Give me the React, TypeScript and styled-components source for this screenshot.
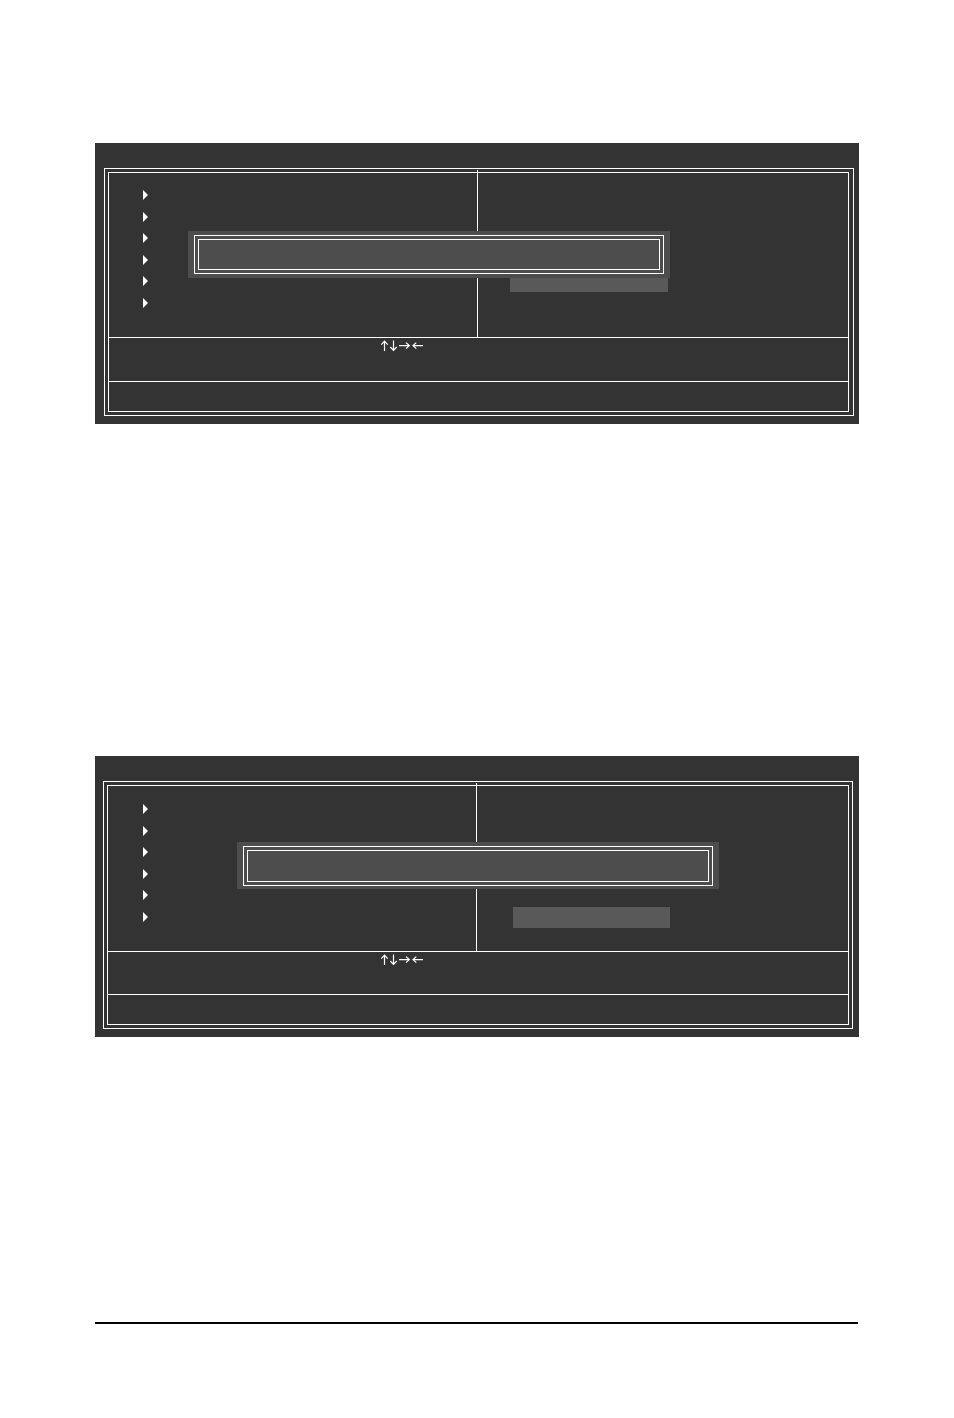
import React from "react";
import styled, { createGlobalStyle } from "styled-components";

const GlobalStyle = createGlobalStyle`
  *, *::before, *::after { box-sizing: border-box; }
  body { margin: 0; background: #fff; font-family: "Liberation Sans", Arial, sans-serif; }
`;

const Page = styled.main`
  padding: 143px 95px 94px;
`;

const Screen = styled.section<{ $left: number; $right: number }>`
  position: relative;
  background: #333;
  padding: 25px ${(p) => p.$right}px 8px ${(p) => p.$left}px;
  & + & { margin-top: 332px; }
`;

const OuterFrame = styled.div<{ $gapRight: number }>`
  border: 1px solid #fff;
  padding: 3px ${(p) => p.$gapRight}px 3px 3px;
`;

const InnerFrame = styled.div`
  border: 1px solid #fff;
`;

const Columns = styled.div<{ $height: number }>`
  display: grid;
  grid-template-columns: 1fr 1fr;
  height: ${(p) => p.$height}px;
  border-bottom: 1px solid #fff;
`;

const MenuColumn = styled.ul<{ $top: number; $indent: number }>`
  display: flex;
  flex-direction: column;
  justify-content: space-between;
  list-style: none;
  margin: 0;
  height: ${(p) => p.$top + 118}px;
  padding: ${(p) => p.$top}px 0 0 ${(p) => p.$indent}px;
`;

const MenuItem = styled.li`
  display: flex;
  height: 10px;
`;

const OptionColumn = styled.div<{ $top: number; $indent: number }>`
  position: relative;
  padding: ${(p) => p.$top}px 0 0 ${(p) => p.$indent}px;

  &::before {
    content: "";
    position: absolute;
    left: -2px;
    top: -3px;
    bottom: 0;
    width: 1px;
    background: #fff;
  }
`;

const Highlight = styled.div<{ $width: number }>`
  width: ${(p) => p.$width}px;
  height: 21px;
  background: #595959;
`;

const KeyHelp = styled.div<{ $height: number; $indent: number }>`
  display: flex;
  align-items: flex-start;
  height: ${(p) => p.$height}px;
  padding: 2px 0 0 ${(p) => p.$indent}px;
  border-bottom: 1px solid #fff;
`;

const HelpLine = styled.div`
  height: 29px;
`;

const Dialog = styled.div<{ $x: number; $y: number }>`
  position: absolute;
  left: ${(p) => p.$x}px;
  top: ${(p) => p.$y}px;
  width: 482px;
  height: 47px;
  display: flex;
  padding: 4px 6px;
  background: #4d4d4d;
`;

const DialogFrame = styled.div<{ $height: number }>`
  flex: 1;
  display: flex;
  height: ${(p) => p.$height}px;
  padding: 3px;
  border: 1px solid #fff;
`;

const DialogBody = styled.div`
  flex: 1;
  border: 1px solid #fff;
`;

const FooterRule = styled.hr`
  height: 2px;
  margin: 285px 1px 0 0;
  border: 0;
  background: #000;
`;

const Marker = () => (
  <svg width="5" height="10" viewBox="0 0 5 10" aria-hidden="true">
    <path d="M0 0L5 5L0 10Z" fill="#fff" />
  </svg>
);

const ArrowKeys = () => (
  <svg width="46" height="12" viewBox="0 0 46 12" fill="none" stroke="#fff" strokeWidth="1.2" role="img" aria-label="Arrow keys">
    <path d="M5.5 11V1.2M2.3 4.6L5.5 1.2L8.7 4.6" />
    <path d="M14.5 0.5V10.4M11.3 7L14.5 10.4L17.7 7" />
    <path d="M20 5.6H30.3M27 2.6L30.3 5.6L27 8.6" />
    <path d="M44 5.6H34M37.3 2.6L34 5.6L37.3 8.6" />
  </svg>
);

interface Setup {
  left: number;
  right: number;
  gapRight: number;
  columns: number;
  menuTop: number;
  menuIndent: number;
  optionTop: number;
  optionIndent: number;
  optionWidth: number;
  help: number;
  helpIndent: number;
  dialogX: number;
  dialogY: number;
  dialogHeight: number;
}

const setups: Setup[] = [
  {
    left: 9, right: 5, gapRight: 4, columns: 165, menuTop: 17, menuIndent: 34,
    optionTop: 98, optionIndent: 31, optionWidth: 158, help: 44, helpIndent: 270,
    dialogX: 93, dialogY: 88, dialogHeight: 39,
  },
  {
    left: 8, right: 6, gapRight: 3, columns: 166, menuTop: 18, menuIndent: 35,
    optionTop: 121, optionIndent: 35, optionWidth: 157, help: 43, helpIndent: 271,
    dialogX: 142, dialogY: 86, dialogHeight: 40,
  },
];

const SetupScreen = ({ s }: { s: Setup }) => (
  <Screen $left={s.left} $right={s.right}>
    <OuterFrame $gapRight={s.gapRight}>
      <InnerFrame>
        <Columns $height={s.columns}>
          <MenuColumn $top={s.menuTop} $indent={s.menuIndent}>
            {Array.from({ length: 6 }, (_, i) => (
              <MenuItem key={i}><Marker /></MenuItem>
            ))}
          </MenuColumn>
          <OptionColumn $top={s.optionTop} $indent={s.optionIndent}>
            <Highlight $width={s.optionWidth} />
          </OptionColumn>
        </Columns>
        <KeyHelp $height={s.help} $indent={s.helpIndent}><ArrowKeys /></KeyHelp>
        <HelpLine />
      </InnerFrame>
    </OuterFrame>
    <Dialog role="dialog" $x={s.dialogX} $y={s.dialogY}>
      <DialogFrame $height={s.dialogHeight}><DialogBody /></DialogFrame>
    </Dialog>
  </Screen>
);

export default function App() {
  return (
    <>
      <GlobalStyle />
      <Page>
        {setups.map((s, i) => <SetupScreen key={i} s={s} />)}
        <FooterRule />
      </Page>
    </>
  );
}
